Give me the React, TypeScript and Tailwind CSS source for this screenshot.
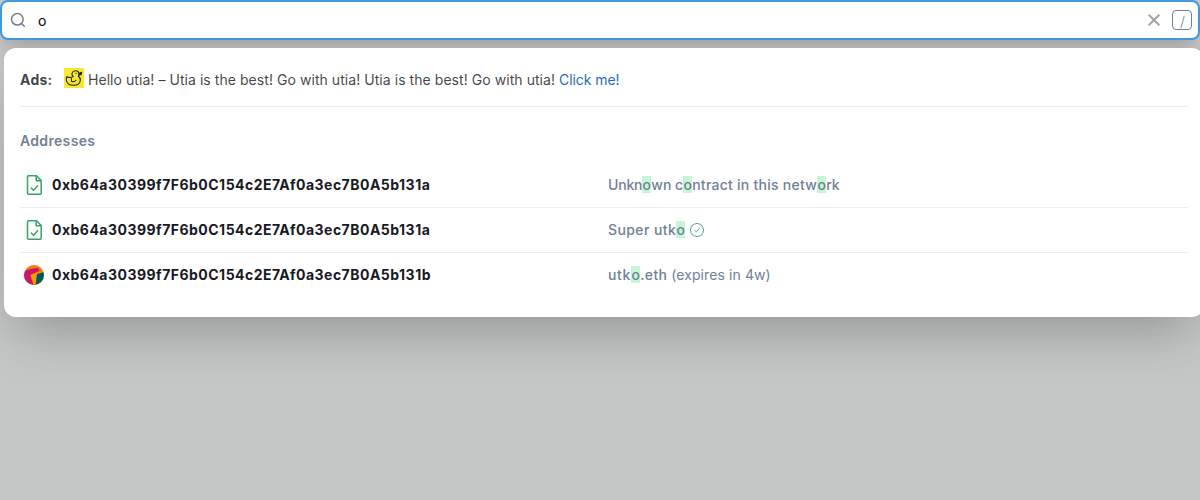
import React from "react";

const font = "font-['Inter',sans-serif]";

function Mark({ children }: { children: React.ReactNode }) {
  return <mark className="inline-block h-[17px] w-[9px] bg-[#c6f6d5] text-center leading-[17px] tracking-normal text-inherit">{children}</mark>;
}

function ContractIcon() {
  return (
    <svg className="size-5 shrink-0" viewBox="0 0 20 20" fill="none" stroke="#38a169" strokeWidth="1.5" strokeLinejoin="round" strokeLinecap="round">
      <path d="M4.5 .8H12.5L17.2 5.5V18.2a1 1 0 0 1-1 1H4.5a1 1 0 0 1-1-1V1.8a1 1 0 0 1 1-1Z" />
      <path d="M12.2 1v4.8H17M7.3 13l2.2 2.2 4.2-4.4" />
    </svg>
  );
}

function Identicon() {
  return (
    <svg className="size-5 shrink-0" viewBox="0 0 20 20">
      <defs>
        <clipPath id="avatar"><circle cx="10" cy="10" r="10" /></clipPath>
      </defs>
      <g clipPath="url(#avatar)">
        <rect width="20" height="20" fill="#fa7900" />
        <path d="M0 6.5 4 4.5 14 2.8 15.5 5.8 7 9.5 10 20H0Z" fill="#c8146c" />
        <path d="M6.3 10 19 6 13.5 20H9.5Z" fill="#f59a00" />
        <path d="M13 9 20 7V20h-8.5Z" fill="#03595e" />
      </g>
    </svg>
  );
}

function VerifiedIcon() {
  return (
    <svg className="ml-1 size-[16px] shrink-0" viewBox="0 0 16 16" fill="none" stroke="#38a169" strokeWidth=".9" strokeLinejoin="round">
      <path d="M8 1.2Q9 2.4 10.6 1.8Q11.1 3.2 12.8 3.2Q12.8 4.9 14.2 5.4Q13.6 7 14.8 8Q13.6 9 14.2 10.6Q12.8 11.1 12.8 12.8Q11.1 12.8 10.6 14.2Q9 13.6 8 14.8Q7 13.6 5.4 14.2Q4.9 12.8 3.2 12.8Q3.2 11.1 1.8 10.6Q2.4 9 1.2 8Q2.4 7 1.8 5.4Q3.2 4.9 3.2 3.2Q4.9 3.2 5.4 1.8Q7 2.4 8 1.2Z" />
      <path d="m5.7 8.2 1.6 1.5 3-3.2" />
    </svg>
  );
}

function Duck() {
  return (
    <svg className="relative -top-0.5 mr-1 size-5 shrink-0" viewBox="0 0 20 20" fill="none" stroke="#25230c" strokeWidth="1.1" strokeLinecap="round" strokeLinejoin="round">
      <rect width="20" height="20" fill="#f6e832" stroke="none" />
      <path d="M9.2 8.6C7.6 7.2 7.7 5.2 8.8 4 10.2 2.5 12.8 2.4 14.2 3.8c1.3 1.3 1.1 3.2.1 4.4 1.5 1 2.3 2.4 2 4.3-.4 2.8-2.8 4.8-6.6 4.8-4.4 0-7.2-2.4-7.4-5.6-.1-1.4 0-2.4.6-3 1.3.9 3.7 1.2 6.3-.1Z" />
      <path d="M7.4 10.6v2.7c1.5.7 3.6.4 4.5-1M11.9 5.3h.3" />
      <path d="m15 5.4 2.6-1.1-.4 2.3-2.2.2Z" fill="#25230c" />
    </svg>
  );
}

interface RowProps {
  icon: React.ReactNode;
  address: string;
  children: React.ReactNode;
  last?: boolean;
}

function Row({ icon, address, children, last }: RowProps) {
  return (
    <div className={`flex items-center px-1 text-sm leading-5 ${last ? "h-11" : "h-[45px] border-b border-[#101112]/8"}`}>
      <div className="flex w-[584px] shrink-0 items-center gap-2">
        {icon}
        <span className="font-bold tracking-[0.483px] text-[#171923]">{address}</span>
      </div>
      <div className="flex items-center font-medium text-[#718096]">{children}</div>
    </div>
  );
}

export default function App() {
  return (
    <div className={`h-[500px] w-[1200px] overflow-hidden bg-[#c5c7c6] ${font}`}>
      <div className="flex h-10 items-center rounded-lg border-2 border-[#4299e1] bg-white pr-1.5 pl-2 text-sm shadow-xl">
        <svg className="size-4 shrink-0" viewBox="0 0 16 16" fill="none" stroke="#718096" strokeWidth="1.5" strokeLinecap="round">
          <circle cx="7.3" cy="7.3" r="5.8" />
          <path d="m11.6 11.6 2.7 2.7" />
        </svg>
        <span className="ml-3 flex-1 pt-0.5 text-black">o</span>
        <svg className="mr-3 size-3" viewBox="0 0 12 12" fill="none" stroke="#a2a4a3" strokeWidth="2">
          <path d="m.7.7 10.6 10.6M11.3.7.7 11.3" />
        </svg>
        <span className="flex size-5 items-center justify-center rounded-sm border border-[#718096] pt-1 pl-px text-sm font-light text-[#718096]">/</span>
      </div>
      <div className="mt-2 ml-1 h-[269px] w-[1200px] rounded-xl bg-white px-4 pt-4 shadow-2xl">
        <div className="flex h-[43px] w-[1168px] items-start border-b border-[#101112]/8">
          <div className="mt-1.5 flex h-5 items-center text-sm leading-5 text-[#101112]/80">
            <span className="w-11 font-bold tracking-[0.25px]">Ads:</span>
            <Duck />
            <span className="tracking-[0.055px]">Hello utia! – Utia is the best! Go with utia! Utia is the best! Go with utia! <a className="tracking-[-0.08px] text-[#2b6cb0]">Click me!</a></span>
          </div>
        </div>
        <div className="mt-6 text-sm leading-5 font-semibold tracking-[0.33px] text-[#718096]">Addresses</div>
        <div className="mt-3">
          <Row icon={<ContractIcon />} address="0xb64a30399f7F6b0C154c2E7Af0a3ec7B0A5b131a">
            <span><span className="tracking-[-0.18px]">Unkn</span><Mark>o</Mark><span>wn c</span><Mark>o</Mark><span className="tracking-[0.26px]">ntract in this netw</span><Mark>o</Mark>rk</span>
          </Row>
          <Row icon={<ContractIcon />} address="0xb64a30399f7F6b0C154c2E7Af0a3ec7B0A5b131a">
            <span><span className="tracking-[0.4px]">Super utk</span><Mark>o</Mark></span><VerifiedIcon />
          </Row>
          <Row last icon={<Identicon />} address="0xb64a30399f7F6b0C154c2E7Af0a3ec7B0A5b131b">
            <span><span className="tracking-[0.7px]">utk</span><Mark>o</Mark><span className="tracking-[0.4px]">.eth</span> <span className="font-normal tracking-[0.1px]">(expires in 4w)</span></span>
          </Row>
        </div>
      </div>
    </div>
  );
}
